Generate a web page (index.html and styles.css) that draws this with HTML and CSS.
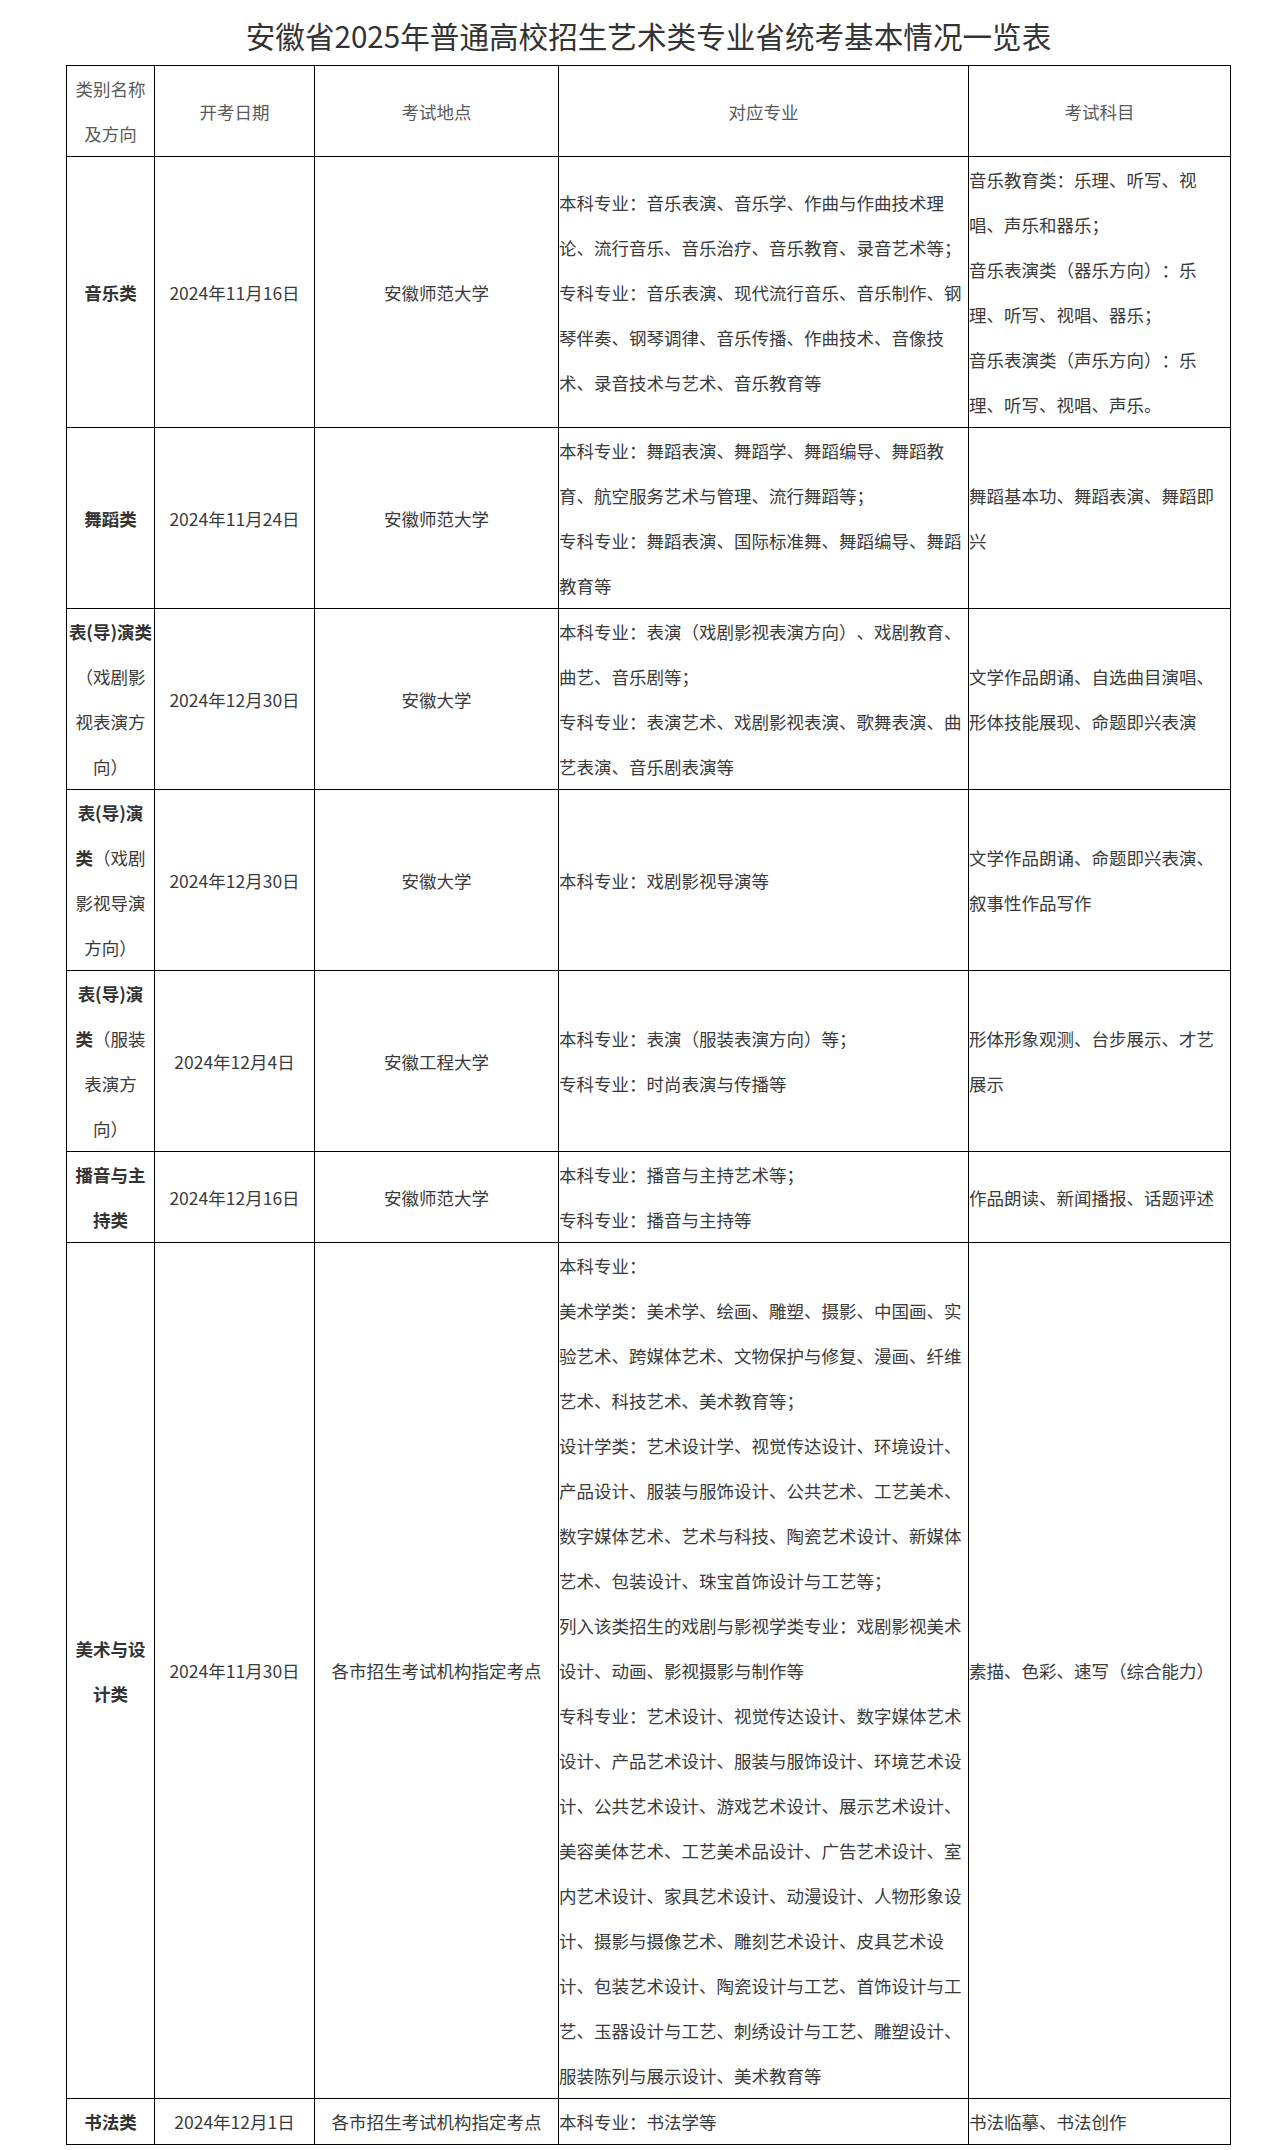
FILE: index.html
```html
<!DOCTYPE html>
<html lang="zh-CN">
<head>
<meta charset="utf-8">
<title>安徽省2025年普通高校招生艺术类专业省统考基本情况一览表</title>
<link rel="stylesheet" href="styles.css">
</head>
<body>
<div class="page">
  <h1 class="title">安徽省2025年普通高校招生艺术类专业省统考基本情况一览表</h1>
  <table class="exam-table">
    <colgroup>
      <col class="c1"><col class="c2"><col class="c3"><col class="c4"><col class="c5">
    </colgroup>
    <thead>
      <tr>
        <th>类别名称及方向</th>
        <th>开考日期</th>
        <th>考试地点</th>
        <th>对应专业</th>
        <th>考试科目</th>
      </tr>
    </thead>
    <tbody>
      <tr>
        <td class="cat"><strong>音乐类</strong></td>
        <td class="ctr">2024年11月16日</td>
        <td class="ctr">安徽师范大学</td>
        <td><p>本科专业：音乐表演、音乐学、作曲与作曲技术理论、流行音乐、音乐治疗、音乐教育、录音艺术等；</p><p>专科专业：音乐表演、现代流行音乐、音乐制作、钢琴伴奏、钢琴调律、音乐传播、作曲技术、音像技术、录音技术与艺术、音乐教育等</p></td>
        <td><p>音乐教育类：乐理、听写、视唱、声乐和器乐；</p><p>音乐表演类（器乐方向）：乐理、听写、视唱、器乐；</p><p>音乐表演类（声乐方向）：乐理、听写、视唱、声乐。</p></td>
      </tr>
      <tr>
        <td class="cat"><strong>舞蹈类</strong></td>
        <td class="ctr">2024年11月24日</td>
        <td class="ctr">安徽师范大学</td>
        <td><p>本科专业：舞蹈表演、舞蹈学、舞蹈编导、舞蹈教育、航空服务艺术与管理、流行舞蹈等；</p><p>专科专业：舞蹈表演、国际标准舞、舞蹈编导、舞蹈教育等</p></td>
        <td><p>舞蹈基本功、舞蹈表演、舞蹈即兴</p></td>
      </tr>
      <tr>
        <td class="cat"><span class="ln"><strong>表(导)演类</strong></span><span class="ln">（戏剧影</span><span class="ln">视表演方</span><span class="ln">向）</span></td>
        <td class="ctr">2024年12月30日</td>
        <td class="ctr">安徽大学</td>
        <td><p>本科专业：表演（戏剧影视表演方向）、戏剧教育、曲艺、音乐剧等；</p><p>专科专业：表演艺术、戏剧影视表演、歌舞表演、曲艺表演、音乐剧表演等</p></td>
        <td><p>文学作品朗诵、自选曲目演唱、形体技能展现、命题即兴表演</p></td>
      </tr>
      <tr>
        <td class="cat"><span class="ln"><strong>表(导)演</strong></span><span class="ln"><strong>类</strong>（戏剧</span><span class="ln">影视导演</span><span class="ln">方向）</span></td>
        <td class="ctr">2024年12月30日</td>
        <td class="ctr">安徽大学</td>
        <td><p>本科专业：戏剧影视导演等</p></td>
        <td><p>文学作品朗诵、命题即兴表演、叙事性作品写作</p></td>
      </tr>
      <tr>
        <td class="cat"><span class="ln"><strong>表(导)演</strong></span><span class="ln"><strong>类</strong>（服装</span><span class="ln">表演方</span><span class="ln">向）</span></td>
        <td class="ctr">2024年12月4日</td>
        <td class="ctr">安徽工程大学</td>
        <td><p>本科专业：表演（服装表演方向）等；</p><p>专科专业：时尚表演与传播等</p></td>
        <td><p>形体形象观测、台步展示、才艺展示</p></td>
      </tr>
      <tr>
        <td class="cat"><strong>播音与主持类</strong></td>
        <td class="ctr">2024年12月16日</td>
        <td class="ctr">安徽师范大学</td>
        <td><p>本科专业：播音与主持艺术等；</p><p>专科专业：播音与主持等</p></td>
        <td><p>作品朗读、新闻播报、话题评述</p></td>
      </tr>
      <tr>
        <td class="cat"><strong>美术与设计类</strong></td>
        <td class="ctr">2024年11月30日</td>
        <td class="ctr">各市招生考试机构指定考点</td>
        <td><p>本科专业：</p><p>美术学类：美术学、绘画、雕塑、摄影、中国画、实验艺术、跨媒体艺术、文物保护与修复、漫画、纤维艺术、科技艺术、美术教育等；</p><p>设计学类：艺术设计学、视觉传达设计、环境设计、产品设计、服装与服饰设计、公共艺术、工艺美术、数字媒体艺术、艺术与科技、陶瓷艺术设计、新媒体艺术、包装设计、珠宝首饰设计与工艺等；</p><p>列入该类招生的戏剧与影视学类专业：戏剧影视美术设计、动画、影视摄影与制作等</p><p>专科专业：艺术设计、视觉传达设计、数字媒体艺术设计、产品艺术设计、服装与服饰设计、环境艺术设计、公共艺术设计、游戏艺术设计、展示艺术设计、美容美体艺术、工艺美术品设计、广告艺术设计、室内艺术设计、家具艺术设计、动漫设计、人物形象设计、摄影与摄像艺术、雕刻艺术设计、皮具艺术设计、包装艺术设计、陶瓷设计与工艺、首饰设计与工艺、玉器设计与工艺、刺绣设计与工艺、雕塑设计、服装陈列与展示设计、美术教育等</p></td>
        <td><p>素描、色彩、速写（综合能力）</p></td>
      </tr>
      <tr>
        <td class="cat"><strong>书法类</strong></td>
        <td class="ctr">2024年12月1日</td>
        <td class="ctr">各市招生考试机构指定考点</td>
        <td><p>本科专业：书法学等</p></td>
        <td><p>书法临摹、书法创作</p></td>
      </tr>
    </tbody>
  </table>
</div>
</body>
</html>
```

FILE: styles.css
```css
html, body {
  margin: 0;
  padding: 0;
  background: #ffffff;
}

body {
  font-family: "Noto Sans CJK SC", "Noto Sans", sans-serif;
  color: #333333;
  text-spacing-trim: space-all;
  text-autospace: no-autospace;
  font-kerning: none;
}

.page {
  padding-left: 66px;
  width: 1165px;
}

.title {
  margin: 0;
  padding-top: 13px;
  font-size: 29.6px;
  line-height: 45px;
  font-weight: 400;
  color: #333333;
  text-align: center;
  white-space: nowrap;
}

.exam-table {
  margin-top: 7px;
  border-collapse: collapse;
  table-layout: fixed;
  width: 1165px;
  font-size: 17.5px;
  line-height: 45px;
}

.c1 { width: 88px; }
.c2 { width: 160px; }
.c3 { width: 244px; }
.c4 { width: 410px; }
.c5 { width: 262px; }

.exam-table th,
.exam-table td {
  border: 1px solid #000000;
  padding: 0;
  vertical-align: middle;
  word-break: normal;
}

.exam-table th {
  font-weight: 400;
  color: #5a5a5a;
  text-align: center;
}

.exam-table td {
  text-align: left;
  color: #3a3a3a;
}

.exam-table td.cat,
.exam-table td.ctr {
  text-align: center;
}

.exam-table td.cat strong {
  font-weight: 700;
  color: #333333;
}

.exam-table .ln {
  display: block;
  white-space: nowrap;
}

.exam-table p {
  margin: 0;
}
```
